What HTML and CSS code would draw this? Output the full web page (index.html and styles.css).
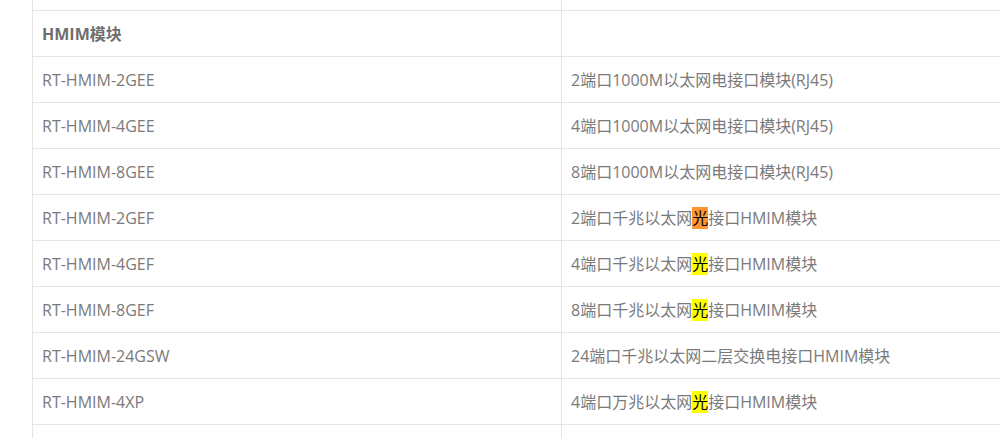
FILE: index.html
```html
<!DOCTYPE html>
<html lang="zh-CN">
<head>
    <meta charset="UTF-8">
    <title>HMIM模块</title>
    <link rel="stylesheet" href="styles.css">
</head>
<body>
    <table class="spec-table">
        <tr class="row-cut"><td></td><td></td></tr>
        <tr class="group-row"><td>HMIM模块</td><td></td></tr>
        <tr><td>RT-HMIM-2GEE</td><td>2端口1000M以太网电接口模块(RJ45)</td></tr>
        <tr><td>RT-HMIM-4GEE</td><td>4端口1000M以太网电接口模块(RJ45)</td></tr>
        <tr><td>RT-HMIM-8GEE</td><td>8端口1000M以太网电接口模块(RJ45)</td></tr>
        <tr><td>RT-HMIM-2GEF</td><td>2端口千兆以太网<span class="mark mark-current">光</span>接口HMIM模块</td></tr>
        <tr><td>RT-HMIM-4GEF</td><td>4端口千兆以太网<span class="mark">光</span>接口HMIM模块</td></tr>
        <tr><td>RT-HMIM-8GEF</td><td>8端口千兆以太网<span class="mark">光</span>接口HMIM模块</td></tr>
        <tr><td>RT-HMIM-24GSW</td><td>24端口千兆以太网二层交换电接口HMIM模块</td></tr>
        <tr><td>RT-HMIM-4XP</td><td>4端口万兆以太网<span class="mark">光</span>接口HMIM模块</td></tr>
        <tr><td></td><td></td></tr>
    </table>
</body>
</html>
```

FILE: styles.css
```css
body {
    margin: 0;
    padding: 0;
    background: #fff;
    font-family: "Open Sans", "Noto Sans CJK SC", sans-serif;
    overflow: hidden;
}
.spec-table {
    border-collapse: collapse;
    margin-left: 32px;
    width: 1000px;
    table-layout: fixed;
    font-size: 16px;
    color: #7a7a7a;
}
.spec-table td {
    height: 45px;
    padding: 0 9px;
    border-left: 1px solid #e5e5e5;
    border-bottom: 1px solid #e5e5e5;
    vertical-align: middle;
    white-space: nowrap;
    line-height: 22px;
}
.spec-table td:first-child {
    width: 510px;
}
.spec-table .row-cut td {
    height: 10px;
}
.group-row td {
    font-weight: bold;
    color: #6e6e6e;
}
.mark {
    background: #ffff00;
    color: #000;
}
.mark-current {
    background: #ff9632;
}
```
